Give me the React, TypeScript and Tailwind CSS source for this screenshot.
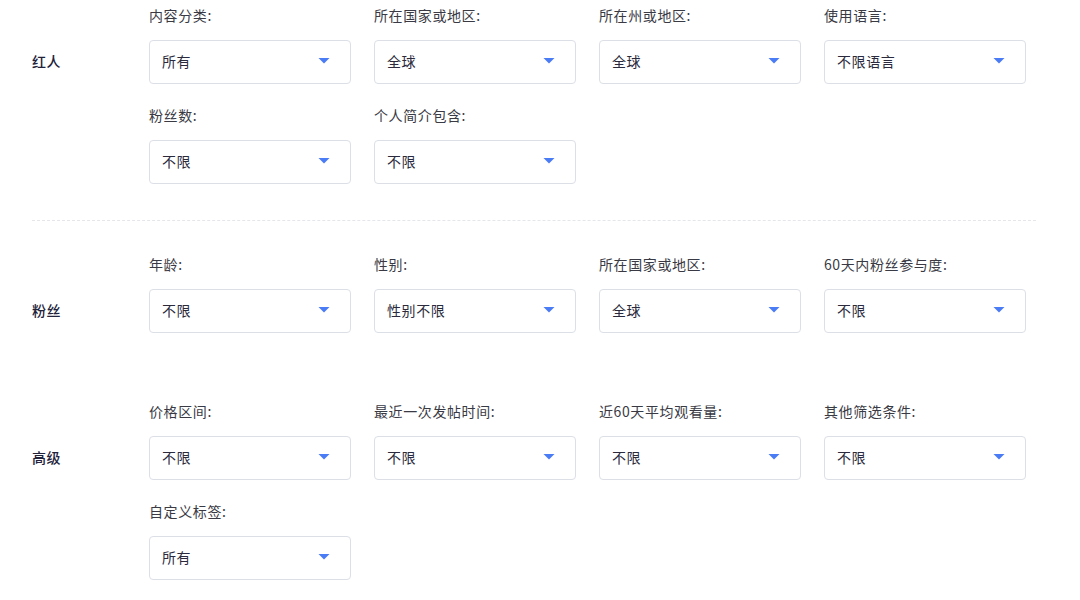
import React from "react";

type Field = { label: string; value: string };

const Arrow = () => (
  <svg width="12" height="6" viewBox="0 0 12 6" className="shrink-0">
    <polygon points="0.5,0 11.5,0 6,5.5" fill="#4a7cf6" />
  </svg>
);

const Select = ({ value }: { value: string }) => (
  <div className="flex h-[44px] w-[202px] items-center justify-between rounded-[4px] border border-[#dcdfe6] bg-white pb-[2px] pl-[12px] pr-[20px]">
    <span className="text-[14px] leading-[20px] tracking-[0.6px] text-[#2a2a3c]">{value}</span>
    <Arrow />
  </div>
);

const FieldBox = ({ f }: { f: Field }) => (
  <div className="flex flex-col">
    <div className="mb-[14px] h-[20px] text-[14px] leading-[18px] tracking-[0.6px] text-[#3a3a44]">{f.label}</div>
    <Select value={f.value} />
  </div>
);

const Section = ({ title, fields }: { title: string; fields: Field[] }) => (
  <div className="flex">
    <div className="w-[117px] shrink-0 pt-[34px]">
      <div className="flex h-[44px] items-center pb-[2px] text-[14px] font-medium tracking-[0.6px] text-[#22223a]">{title}</div>
    </div>
    <div className="grid grid-cols-[202px_202px_202px_202px] gap-x-[23px] gap-y-[22px]">
      {fields.map((f, i) => (
        <FieldBox key={i} f={f} />
      ))}
    </div>
  </div>
);

export default function App() {
  return (
    <div
      className="min-h-[600px] w-[1080px] bg-white pl-[32px] pt-[6px]"
      style={{ fontFamily: '"Noto Sans CJK SC", "Noto Sans", sans-serif' }}
    >
      <Section
        title="红人"
        fields={[
          { label: "内容分类:", value: "所有" },
          { label: "所在国家或地区:", value: "全球" },
          { label: "所在州或地区:", value: "全球" },
          { label: "使用语言:", value: "不限语言" },
          { label: "粉丝数:", value: "不限" },
          { label: "个人简介包含:", value: "不限" },
        ]}
      />
      <div className="mb-[34px] mt-[36px] w-[1004px] border-t border-dashed border-[#e4e6ea]" />
      <Section
        title="粉丝"
        fields={[
          { label: "年龄:", value: "不限" },
          { label: "性别:", value: "性别不限" },
          { label: "所在国家或地区:", value: "全球" },
          { label: "60天内粉丝参与度:", value: "不限" },
        ]}
      />
      <div className="h-[69px]" />
      <Section
        title="高级"
        fields={[
          { label: "价格区间:", value: "不限" },
          { label: "最近一次发帖时间:", value: "不限" },
          { label: "近60天平均观看量:", value: "不限" },
          { label: "其他筛选条件:", value: "不限" },
          { label: "自定义标签:", value: "所有" },
        ]}
      />
    </div>
  );
}
